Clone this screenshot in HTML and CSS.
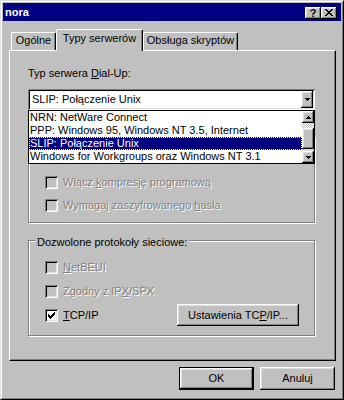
FILE: index.html
```html
<!DOCTYPE html>
<html lang="pl">
<head>
<meta charset="utf-8">
<title>nora</title>
<link rel="stylesheet" href="styles.css">
</head>
<body>
<div class="window">
  <div class="frame">
    <div class="titlebar">
      <span class="title">nora</span>
      <div class="title-buttons">
        <div class="tbtn raised help">?</div>
        <div class="tbtn raised close">
          <svg width="8" height="7" viewBox="0 0 8 7"><path d="M0 0h2v1h-2zM6 0h2v1h-2zM1 1h2v1h-2zM5 1h2v1h-2zM2 2h4v1h-4zM3 3h2v1h-2zM2 4h4v1h-4zM1 5h2v1h-2zM5 5h2v1h-2zM0 6h2v1h-2zM6 6h2v1h-2z" fill="#000"/></svg>
        </div>
      </div>
    </div>
    <div class="body">
      <div class="tabs">
        <div class="tab t1">Ogólne</div>
        <div class="tab t2 active">Typy serwerów</div>
        <div class="tab t3">Obsługa skryptów</div>
      </div>
      <div class="panel">
        <div class="field-label">Typ serwera <u>D</u>ial-Up:</div>
        <div class="combo-wrap">
          <div class="combo">
            <span class="combo-text">SLIP: Połączenie Unix</span>
            <span class="arrow-btn raised">
              <svg width="5" height="3" viewBox="0 0 5 3"><path d="M0 0h5v1h-5zM1 1h3v1h-3zM2 2h1v1h-1z" fill="#000"/></svg>
            </span>
          </div>
          <div class="droplist">
            <div class="items">
              <div class="item">NRN: NetWare Connect</div>
              <div class="item">PPP: Windows 95, Windows NT 3.5, Internet</div>
              <div class="item sel">SLIP: Połączenie Unix</div>
              <div class="item">Windows for Workgroups oraz Windows NT 3.1</div>
            </div>
            <div class="vscroll">
              <div class="sb-btn raised">
                <svg width="5" height="3" viewBox="0 0 5 3"><path d="M2 0h1v1h-1zM1 1h3v1h-3zM0 2h5v1h-5z" fill="#000"/></svg>
              </div>
              <div class="sb-track top"></div>
              <div class="sb-thumb raised"></div>
              <div class="sb-track bottom"></div>
              <div class="sb-btn raised">
                <svg width="5" height="3" viewBox="0 0 5 3"><path d="M0 0h5v1h-5zM1 1h3v1h-3zM2 2h1v1h-1z" fill="#000"/></svg>
              </div>
            </div>
          </div>
        </div>

        <div class="group group-adv">
          <div class="check-row disabled">
            <span class="cb"></span>
            <span class="cb-label">Włącz <u>k</u>ompresję programową</span>
          </div>
          <div class="check-row disabled">
            <span class="cb"></span>
            <span class="cb-label">Wymagaj zaszyfrowanego <u>h</u>asła</span>
          </div>
        </div>

        <div class="group group-proto">
          <div class="group-title">Dozwolone protokoły sieciowe:</div>
          <div class="rows">
            <div class="check-row proto disabled">
              <span class="cb"></span>
              <span class="cb-label"><u>N</u>etBEUI</span>
            </div>
            <div class="check-row proto disabled">
              <span class="cb"></span>
              <span class="cb-label">Zgodny z IP<u>X</u>/SPX</span>
            </div>
            <div class="check-row proto tcp">
              <span class="cb checked">
                <svg width="7" height="7" viewBox="0 0 7 7"><path d="M6 0h1v1h-1zM5 1h2v1h-2zM0 2h1v1h-1zM4 2h3v1h-3zM0 3h2v1h-2zM3 3h3v1h-3zM0 4h5v1h-5zM1 5h3v1h-3zM2 6h1v1h-1z" fill="#000"/></svg>
              </span>
              <span class="cb-label"><u>T</u>CP/IP</span>
              <div class="btn raised tcp-btn">Ustawienia TC<u>P</u>/IP...</div>
            </div>
          </div>
        </div>
      </div>
      <div class="actions">
        <div class="btn raised default">OK</div>
        <div class="btn raised">Anuluj</div>
      </div>
    </div>
  </div>
</div>
</body>
</html>
```
FILE: styles.css
```css
* { box-sizing: border-box; }
html, body { margin: 0; padding: 0; }
body {
  width: 344px;
  height: 400px;
  background: #c0c0c0;
  font-family: "Liberation Sans", Arial, sans-serif;
  font-size: 11px;
  line-height: 13px;
  color: #000;
  overflow: hidden;
}
u { text-underline-offset: 1px; }

.raised {
  background: #c0c0c0;
  box-shadow: inset -1px -1px #000, inset 1px 1px #fff, inset -2px -2px #808080, inset 2px 2px #dfdfdf;
}

.window {
  width: 344px;
  height: 400px;
  border: 1px solid;
  border-color: #dfdfdf #000 #000 #dfdfdf;
  background: #c0c0c0;
}
.frame {
  height: 100%;
  border: 1px solid;
  border-color: #fff #808080 #808080 #fff;
  padding: 1px;
  display: flex;
  flex-direction: column;
}

.titlebar {
  height: 18px;
  flex: none;
  background: #000080;
  color: #fff;
  display: flex;
  align-items: center;
  padding: 0 4px 0 2px;
}
.title { font-weight: bold; flex: 1; }
.title-buttons { display: flex; align-self: flex-start; margin-top: 4px; }
.tbtn {
  width: 16px;
  height: 12px;
  display: flex;
  align-items: center;
  justify-content: center;
  color: #000;
}
.tbtn.help { font-weight: bold; font-size: 11px; line-height: 12px; padding-bottom: 1px; }
.tbtn.close svg { display: block; margin-top: -1px; }

.body {
  flex: 1;
  padding: 8px 5px 0 6px;
}

.tabs {
  display: flex;
  align-items: flex-end;
  height: 21px;
  padding-left: 2px;
}
.tab {
  height: 18px;
  padding-top: 1px;
  text-align: center;
  border-top: 1px solid #fff;
  border-left: 1px solid #fff;
  border-right: 1px solid #000;
  border-top-left-radius: 2px;
  border-top-right-radius: 2px;
  box-shadow: inset -1px 0 #808080;
  background: #c0c0c0;
  white-space: nowrap;
}
.tab.t1 { width: 45px; }
.tab.t2 { width: 87px; }
.tab.t3 { width: 95px; }
.tab.active {
  height: 22px;
  padding-top: 2px;
  margin-bottom: -1px;
  position: relative;
  z-index: 1;
}

.panel {
  width: 327px;
  height: 311px;
  border: 1px solid;
  border-color: #fff #000 #000 #fff;
  box-shadow: inset -1px -1px #808080;
  padding: 16px 0 0 18px;
}
.field-label { height: 13px; margin-bottom: 9px; }

.combo-wrap {
  position: relative;
  width: 287px;
  height: 21px;
}
.combo {
  height: 21px;
  background: #fff;
  box-shadow: inset 1px 1px #808080, inset -1px -1px #fff, inset 2px 2px #000, inset -2px -2px #dfdfdf;
  padding: 2px;
  display: flex;
}
.combo-text { flex: 1; padding-left: 2px; line-height: 17px; white-space: nowrap; }
.arrow-btn {
  width: 12px;
  height: 17px;
  display: flex;
  align-items: center;
  justify-content: center;
}
.arrow-btn svg, .sb-btn svg { display: block; }

.droplist {
  position: absolute;
  top: 21px;
  left: 0;
  width: 287px;
  height: 54px;
  background: #fff;
  border: 1px solid #000;
  display: flex;
  z-index: 2;
}
.items { flex: 1; }
.item {
  height: 13px;
  line-height: 13px;
  padding-left: 1px;
  white-space: nowrap;
  overflow: hidden;
}
.item.sel {
  background: #000080;
  color: #fff;
  outline: 1px dotted #ffff80;
  outline-offset: -1px;
}
.vscroll {
  width: 12px;
  display: flex;
  flex-direction: column;
}
.sb-btn {
  height: 12px;
  display: flex;
  align-items: center;
  justify-content: center;
}
.sb-track {
  background: repeating-conic-gradient(#c0c0c0 0 25%, #fff 0 50%) 0 0 / 2px 2px;
}
.sb-track.top { height: 5px; }
.sb-track.bottom { height: 2px; }
.sb-thumb { height: 21px; }

.group {
  width: 287px;
  border: 1px solid #808080;
  box-shadow: inset 1px 1px #fff, 1px 1px #fff;
}
.group-adv {
  margin-top: 26px;
  height: 87px;
  padding: 34px 0 5px 16px;
}
.group-proto {
  margin-top: 17px;
  height: 96px;
}
.group-title {
  width: max-content;
  margin: -5px 0 0 6px;
  padding: 0 2px;
  height: 13px;
  background: #c0c0c0;
}
.rows { padding: 6px 15px 8px 16px; }

.check-row {
  display: flex;
  align-items: center;
  height: 23px;
  white-space: nowrap;
}
.check-row.proto { height: 24px; }
.cb {
  width: 13px;
  height: 13px;
  flex: none;
  margin-right: 5px;
  background: #fff;
  box-shadow: inset 1px 1px #808080, inset -1px -1px #fff, inset 2px 2px #000, inset -2px -2px #dfdfdf;
  display: flex;
  padding: 3px 0 0 3px;
}
.cb svg { display: block; }
.check-row.disabled .cb { background: #c0c0c0; }
.check-row.disabled .cb-label {
  color: #808080;
  text-shadow: 1px 1px 0 #fff;
}

.btn {
  width: 75px;
  height: 23px;
  display: flex;
  align-items: center;
  justify-content: center;
  white-space: nowrap;
}
.tcp-btn {
  width: 122px;
  height: 22px;
  margin-left: auto;
}
.btn.default {
  border: 1px solid #000;
}

.actions {
  display: flex;
  justify-content: flex-end;
  gap: 6px;
  margin-top: 6px;
  padding-right: 1px;
}
```
